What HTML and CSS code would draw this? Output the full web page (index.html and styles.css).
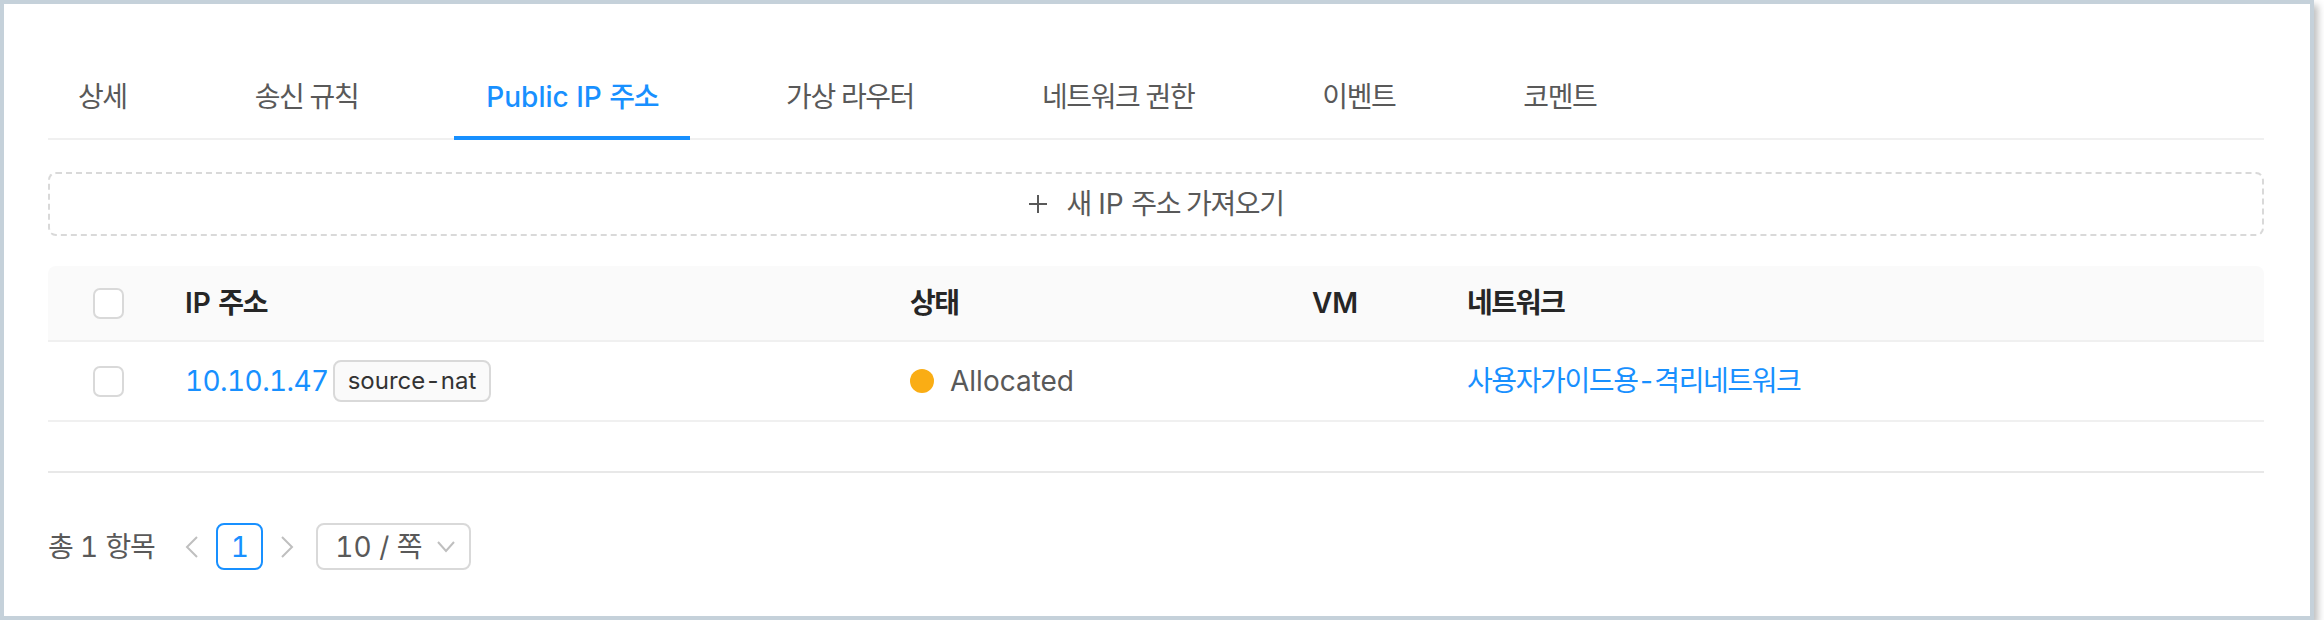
FILE: index.html
```html
<!DOCTYPE html>
<html lang="ko">
<head>
<meta charset="utf-8">
<title>Public IP 주소</title>
<link rel="stylesheet" href="styles.css">
</head>
<body>
<div class="frame">
  <div class="tabs">
    <div class="tab ko">상세</div>
    <div class="tab ko">송신 규칙</div>
    <div class="tab active">Public IP <span class="ko">주소</span></div>
    <div class="tab ko">가상 라우터</div>
    <div class="tab ko">네트워크 권한</div>
    <div class="tab ko">이벤트</div>
    <div class="tab ko">코멘트</div>
  </div>

  <div class="add-btn">
    <svg class="plus" width="20" height="20" viewBox="0 0 20 20"><path d="M10 1v18M1 10h18" stroke="#595959" stroke-width="2" fill="none"/></svg>
    <span><span class="ko">새</span> IP <span class="ko">주소 가져오기</span></span>
  </div>

  <div class="table">
    <div class="row head">
      <div class="cell sel"><span class="checkbox"></span></div>
      <div class="cell">IP&nbsp;<span class="ko">주소</span></div>
      <div class="cell ko">상태</div>
      <div class="cell">VM</div>
      <div class="cell ko">네트워크</div>
    </div>
    <div class="row body">
      <div class="cell sel"><span class="checkbox"></span></div>
      <div class="cell"><span class="link ip">10.10.1.47</span><span class="tag">source-nat</span></div>
      <div class="cell"><span class="dot"></span><span>Allocated</span></div>
      <div class="cell"></div>
      <div class="cell"><span class="link ko">사용자가이드용-격리네트워크</span></div>
    </div>
  </div>

  <div class="divider"></div>

  <div class="pagination">
    <span class="total"><span class="ko">총</span> 1 <span class="ko">항목</span></span>
    <span class="pg-arrow">
      <svg width="14" height="24" viewBox="0 0 14 24"><path d="M12 2L2 12l10 10" stroke="#bfbfbf" stroke-width="2" fill="none"/></svg>
    </span>
    <span class="pg-item">1</span>
    <span class="pg-arrow">
      <svg width="14" height="24" viewBox="0 0 14 24"><path d="M2 2l10 10L2 22" stroke="#bfbfbf" stroke-width="2" fill="none"/></svg>
    </span>
    <span class="size-select">
      <span>10 / <span class="ko">쪽</span></span>
      <svg class="chev" width="18" height="12" viewBox="0 0 18 12"><path d="M1 1l8 9 8-9" stroke="#bfbfbf" stroke-width="2" fill="none"/></svg>
    </span>
  </div>
</div>
</body>
</html>
```

FILE: styles.css
```css
* {
  box-sizing: border-box;
}

html,
body {
  margin: 0;
  background: #ffffff;
}

body {
  font-family: Inter, "Noto Sans CJK KR", sans-serif;
  font-size: 28px;
  line-height: 44px;
  color: #595959;
  font-variant-numeric: tabular-nums;
}

.ko {
  letter-spacing: -0.05em;
}

.frame {
  width: 2314px;
  height: 620px;
  border: 4px solid #c5d1da;
  box-shadow: 4px 5px 7px rgba(0, 0, 0, 0.25);
  background: #ffffff;
  padding: 47px 46px 0 44px;
}

/* Tabs */
.tabs {
  display: flex;
  gap: 64px;
  border-bottom: 2px solid #f0f0f0;
}

.tab {
  padding: 24px 32px 17px;
  border-bottom: 4px solid transparent;
  margin-bottom: -2px;
  color: #595959;
  white-space: nowrap;
}

.tab:first-child {
  padding-left: 30px;
}

.tab.active {
  color: #1890ff;
  border-bottom-color: #1890ff;
  font-weight: 500;
}

/* Add button */
.add-btn {
  margin-top: 32px;
  height: 64px;
  border: 2px dashed #d9d9d9;
  border-radius: 8px;
  display: flex;
  align-items: center;
  justify-content: center;
  gap: 18px;
  color: #595959;
}

/* Table */
.table {
  margin-top: 30px;
}

.row {
  display: grid;
  grid-template-columns: 121px 725px 402px 155px 1fr;
  align-items: center;
}

.row.head {
  height: 76px;
  background: #fafafa;
  border-bottom: 2px solid #f0f0f0;
  border-radius: 8px 8px 0 0;
  color: #262626;
  font-weight: 600;
}

.row.body {
  height: 80px;
  border-bottom: 2px solid #f0f0f0;
}

.cell {
  padding: 0 16px;
  display: flex;
  align-items: center;
  white-space: nowrap;
}

.cell.sel {
  justify-content: center;
}

.checkbox {
  display: block;
  width: 31px;
  height: 31px;
  border: 2px solid #d9d9d9;
  border-radius: 7px;
  background: #ffffff;
}

.link {
  color: #1890ff;
}

.link.ip {
  letter-spacing: -0.6px;
}

.tag {
  margin-left: 4px;
  height: 42px;
  line-height: 38px;
  padding: 0 13px;
  font-size: 24px;
  border: 2px solid #d9d9d9;
  border-radius: 8px;
  background: #fafafa;
  color: #333333;
}

.dot {
  width: 24px;
  height: 24px;
  border-radius: 50%;
  background: #faad14;
  margin-right: 16px;
}

/* Footer */
.divider {
  margin-top: 49px;
  height: 2px;
  background: #e8e8e8;
}

.pagination {
  margin-top: 50px;
  display: flex;
  align-items: center;
  height: 47px;
}

.total {
  margin-right: 14px;
  color: #595959;
}

.pg-arrow {
  width: 48px;
  height: 47px;
  display: flex;
  align-items: center;
  justify-content: center;
}

.pg-item {
  width: 47px;
  height: 47px;
  border: 2px solid #1890ff;
  border-radius: 8px;
  color: #1890ff;
  display: flex;
  align-items: center;
  justify-content: center;
}

.size-select {
  margin-left: 5px;
  width: 155px;
  height: 47px;
  border: 2px solid #d9d9d9;
  border-radius: 8px;
  display: flex;
  align-items: center;
  padding-left: 17px;
  gap: 16px;
  color: #595959;
}
```
